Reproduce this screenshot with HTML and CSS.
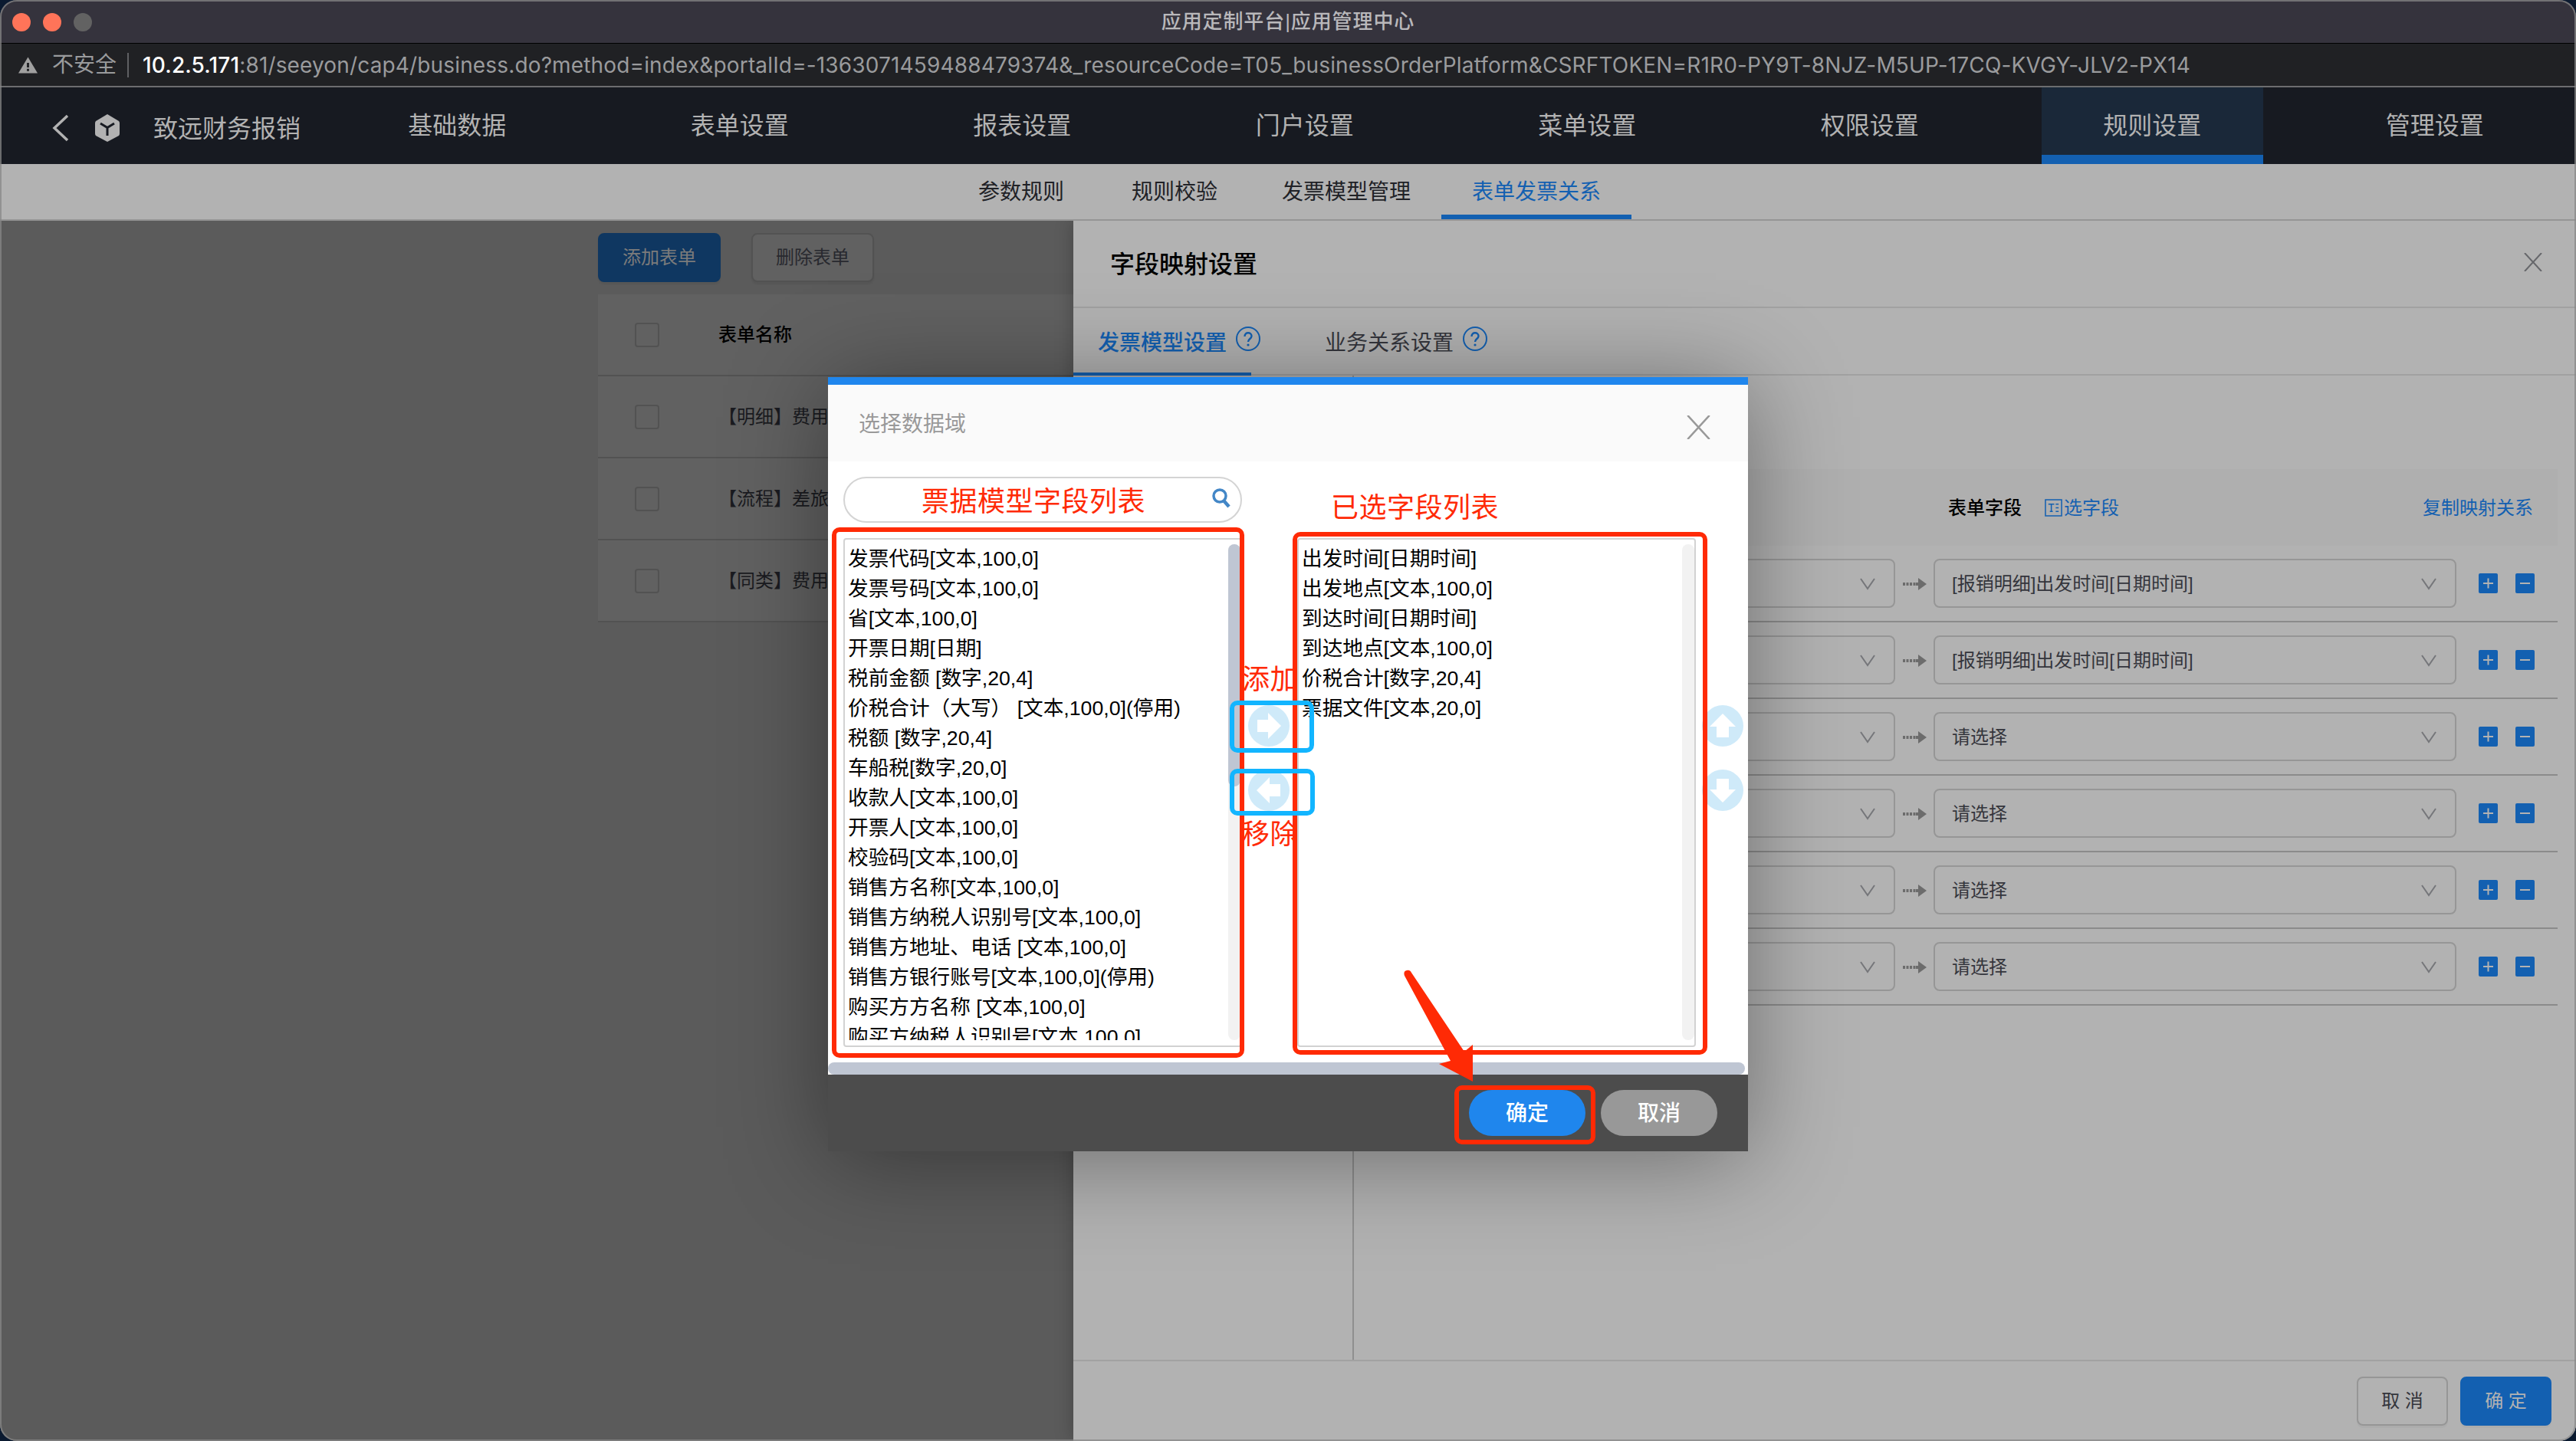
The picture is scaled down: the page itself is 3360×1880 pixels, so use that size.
FILE: index.html
```html
<!DOCTYPE html>
<html lang="zh-CN">
<head>
    <meta charset="UTF-8">
    <title>应用定制平台|应用管理中心</title>
    <link rel="stylesheet" href="styles.css">
</head>
<body>
<svg class="defs">
    <symbol id="i-close" viewBox="0 0 24 24"><path d="M1 0L23 24M23 0L1 24" fill="none" stroke="currentColor" stroke-width="2"/></symbol>
    <symbol id="i-down" viewBox="0 0 22 16"><path d="M2 1L11 14L20 1" fill="none" stroke="currentColor" stroke-width="2"/></symbol>
    <symbol id="i-link" viewBox="0 0 32 18"><path d="M0 9H20" fill="none" stroke="currentColor" stroke-width="4" stroke-dasharray="3 1.5"/><path d="M20 1L31 9L20 17V11H17V7H20Z" fill="currentColor"/></symbol>
    <symbol id="i-help" viewBox="0 0 32 32"><circle cx="16" cy="16" r="15" fill="none" stroke="currentColor" stroke-width="2"/><path d="M11.5 13C11.5 6.500 20.500 7 20.500 12.500C20.500 16 16 16 16 20" fill="none" stroke="currentColor" stroke-width="2.400"/><circle cx="16" cy="24" r="1.600" fill="currentColor"/></symbol>
    <symbol id="i-arrow" viewBox="0 0 54 54"><circle cx="27" cy="27" r="27" fill="#cfeaf9"/><path d="M12 19H26V10L43 27L26 44V35H12Z" fill="#fff"/></symbol>
</svg>
<div class="window">
    <div class="titlebar">
        <div class="lights"><i></i><i></i><i class="off"></i></div>
        <div class="title">应用定制平台|应用管理中心</div>
    </div>
    <div class="address">
        <svg class="warn" viewBox="0 0 26 22"><path d="M13 0L26 22H0Z" fill="#a0a0a0"/><path d="M13 8V14M13 16V19" stroke="#202124" stroke-width="3"/></svg>
        <span class="unsafe">不安全</span>
        <span class="url"><b>10.2.5.171</b>:81/seeyon/cap4/business.do?method=index&amp;portalId=-1363071459488479374&amp;_resourceCode=T05_businessOrderPlatform&amp;CSRFTOKEN=R1R0-PY9T-8NJZ-M5UP-17CQ-KVGY-JLV2-PX14</span>
    </div>
    <div class="nav">
        <div class="brand">
            <svg class="back" viewBox="0 0 22 36"><path d="M20 2L3 18L20 34" fill="none" stroke="#b2b2b2" stroke-width="3.500"/></svg>
            <svg class="cube" viewBox="0 0 32 36"><path d="M16 0L31 9Q32 10 32 12V25Q32 27 31 28L16 36L1 28Q0 27 0 25V12Q0 10 1 9Z" fill="#b2b2b2"/><path d="M7 12L16 17.500L25 12M16 17.500V28" fill="none" stroke="#171a21" stroke-width="3"/></svg>
            <span>致远财务报销</span>
        </div>
        <div class="nav-item"><span>基础数据</span></div>
        <div class="nav-item"><span>表单设置</span></div>
        <div class="nav-item"><span>报表设置</span></div>
        <div class="nav-item"><span>门户设置</span></div>
        <div class="nav-item"><span>菜单设置</span></div>
        <div class="nav-item"><span>权限设置</span></div>
        <div class="nav-item active"><span>规则设置</span></div>
        <div class="nav-item"><span>管理设置</span></div>
    </div>
    <div class="subnav">
        <div>参数规则</div>
        <div>规则校验</div>
        <div>发票模型管理</div>
        <div class="active">表单发票关系</div>
    </div>

    <div class="main">
        <div class="forms">
            <div class="form-btns">
                <div class="fbtn primary">添加表单</div>
                <div class="fbtn">删除表单</div>
            </div>
            <div class="form-row head"><i class="check"></i><span>表单名称</span></div>
            <div class="form-row"><i class="check"></i><span>【明细】费用</span></div>
            <div class="form-row"><i class="check"></i><span>【流程】差旅</span></div>
            <div class="form-row"><i class="check"></i><span>【同类】费用</span></div>
        </div>

        <div class="drawer">
            <div class="drawer-head"><span>字段映射设置</span><svg><use href="#i-close"/></svg></div>
            <div class="tabs">
                <div class="tab active">发票模型设置<svg><use href="#i-help"/></svg></div>
                <div class="tab">业务关系设置<svg><use href="#i-help"/></svg></div>
            </div>
            <div class="drawer-body">
                <div class="side"></div>
                <div class="mapping">
                    <div class="map-head">
                        <span class="name">表单字段</span>
                        <svg class="pick" viewBox="0 0 24 24"><path d="M1 1H23V23H1ZM5 7H13M9 7V17M7 17H11M15 7H19M15 12H19M15 17H19" fill="none" stroke="currentColor" stroke-width="1.600"/></svg>
                        <span class="link">选字段</span>
                        <span class="link copy">复制映射关系</span>
                    </div>
                    <div class="map-row"><div class="select from"><svg><use href="#i-down"/></svg></div><svg class="to"><use href="#i-link"/></svg><div class="select"><span>[报销明细]出发时间[日期时间]</span><svg><use href="#i-down"/></svg></div><i class="op plus"></i><i class="op"></i></div>
                    <div class="map-row"><div class="select from"><svg><use href="#i-down"/></svg></div><svg class="to"><use href="#i-link"/></svg><div class="select"><span>[报销明细]出发时间[日期时间]</span><svg><use href="#i-down"/></svg></div><i class="op plus"></i><i class="op"></i></div>
                    <div class="map-row"><div class="select from"><svg><use href="#i-down"/></svg></div><svg class="to"><use href="#i-link"/></svg><div class="select"><span>请选择</span><svg><use href="#i-down"/></svg></div><i class="op plus"></i><i class="op"></i></div>
                    <div class="map-row"><div class="select from"><svg><use href="#i-down"/></svg></div><svg class="to"><use href="#i-link"/></svg><div class="select"><span>请选择</span><svg><use href="#i-down"/></svg></div><i class="op plus"></i><i class="op"></i></div>
                    <div class="map-row"><div class="select from"><svg><use href="#i-down"/></svg></div><svg class="to"><use href="#i-link"/></svg><div class="select"><span>请选择</span><svg><use href="#i-down"/></svg></div><i class="op plus"></i><i class="op"></i></div>
                    <div class="map-row"><div class="select from"><svg><use href="#i-down"/></svg></div><svg class="to"><use href="#i-link"/></svg><div class="select"><span>请选择</span><svg><use href="#i-down"/></svg></div><i class="op plus"></i><i class="op"></i></div>
                </div>
            </div>
            <div class="drawer-foot">
                <div class="dbtn">取 消</div>
                <div class="dbtn primary">确 定</div>
            </div>
        </div>
    </div>

    <div class="modal">
        <div class="modal-head"><span>选择数据域</span><svg><use href="#i-close"/></svg></div>
        <div class="panes">
            <div class="pane">
                <div class="search"><svg viewBox="0 0 24 26"><circle cx="10" cy="10" r="8" fill="none" stroke="#4387c7" stroke-width="3.500"/><path d="M15 16L22 24" stroke="#4387c7" stroke-width="4.500"/></svg></div>
                <div class="list">
                    <div class="options">
                        <div>发票代码[文本,100,0]</div>
                        <div>发票号码[文本,100,0]</div>
                        <div>省[文本,100,0]</div>
                        <div>开票日期[日期]</div>
                        <div>税前金额 [数字,20,4]</div>
                        <div>价税合计（大写） [文本,100,0](停用)</div>
                        <div>税额 [数字,20,4]</div>
                        <div>车船税[数字,20,0]</div>
                        <div>收款人[文本,100,0]</div>
                        <div>开票人[文本,100,0]</div>
                        <div>校验码[文本,100,0]</div>
                        <div>销售方名称[文本,100,0]</div>
                        <div>销售方纳税人识别号[文本,100,0]</div>
                        <div>销售方地址、电话 [文本,100,0]</div>
                        <div>销售方银行账号[文本,100,0](停用)</div>
                        <div>购买方方名称 [文本,100,0]</div>
                        <div>购买方纳税人识别号[文本,100,0]</div>
                    </div>
                    <div class="track"><div class="thumb"></div></div>
                </div>
            </div>
            <div class="arrows">
                <svg><use href="#i-arrow"/></svg>
                <svg class="left"><use href="#i-arrow"/></svg>
            </div>
            <div class="pane chosen">
                <div class="list">
                    <div class="options">
                        <div>出发时间[日期时间]</div>
                        <div>出发地点[文本,100,0]</div>
                        <div>到达时间[日期时间]</div>
                        <div>到达地点[文本,100,0]</div>
                        <div>价税合计[数字,20,4]</div>
                        <div>票据文件[文本,20,0]</div>
                    </div>
                    <div class="track"></div>
                </div>
            </div>
            <div class="arrows sort">
                <svg class="up"><use href="#i-arrow"/></svg>
                <svg class="down"><use href="#i-arrow"/></svg>
            </div>
        </div>
        <div class="hscroll"></div>
        <div class="modal-foot">
            <div class="mbtn ok">确定</div>
            <div class="mbtn">取消</div>
        </div>

        <!-- 标注 -->
        <div class="note n-model">票据模型字段列表</div>
        <div class="note n-chosen">已选字段列表</div>
        <div class="note n-add">添加</div>
        <div class="note n-remove">移除</div>
        <div class="mark m-model"></div>
        <div class="mark m-chosen"></div>
        <div class="mark m-ok"></div>
        <div class="mark blue m-add"></div>
        <div class="mark blue m-remove"></div>
        <svg class="pointer" viewBox="0 0 90 146"><path d="M1 8Q-1 2 4 1Q8 0 10 4L79 107L90 98V146L46 123L61 119Z" fill="#ff2a05"/></svg>
    </div>
</div>
</body>
</html>
```

FILE: styles.css
```css
* { box-sizing: border-box; }
body { margin: 0; background: #0b1a30; font-family: "Liberation Sans", "Noto Sans CJK SC", sans-serif; font-size: 24px; color: #34353c; }
svg { display: block; flex: none; }
.defs { position: absolute; width: 0; height: 0; }

.window { position: relative; width: 3360px; height: 1880px; border-radius: 22px; overflow: hidden; display: flex; flex-direction: column; background: #b2b2b2; }
.window::after { content: ""; position: absolute; inset: 0; border: 2px solid rgba(135, 135, 135, 0.75); border-radius: 22px; }

.titlebar { height: 57px; padding-top: 2px; border-bottom: 1px solid #000; background: #35333d; display: flex; align-items: center; flex: none; }
.lights { display: flex; gap: 16px; width: 200px; padding-left: 16px; }
.lights i { width: 24px; height: 24px; border-radius: 50%; background: #ff7459; }
.lights i.off { background: #626262; }
.title { flex: 1; padding: 0 200px 7px 0; text-align: center; font-size: 26px; font-weight: 500; letter-spacing: 0.9px; color: #b9b8bb; }

.address { height: 57px; border-bottom: 2px solid #6c6d6f; background: #202124; display: flex; align-items: center; flex: none; color: #9a9b9d; font-size: 28px; white-space: nowrap; }
.warn { width: 25px; height: 22px; margin: 0 18px 0 24px; }
.unsafe { width: 101px; height: 32px; line-height: 32px; padding-left: 1px; border-right: 2px solid #5f6063; }
.url { margin-left: 18px; font-family: Inter, "Liberation Sans", sans-serif; font-size: 28px; letter-spacing: 0.15px; }
.url b { font-weight: 500; color: #fff; }

.nav { height: 100px; background: #171a21; color: #b2b2b2; font-size: 32px; display: flex; flex: none; }
.brand { width: 412px; display: flex; align-items: center; padding: 6px 0 0 68px; white-space: nowrap; }
.brand span { padding-bottom: 5px; }
.back { width: 22px; height: 36px; margin-right: 34px; }
.cube { width: 32px; height: 36px; margin-right: 44px; }
.nav-item { flex: 1; display: flex; justify-content: center; }
.nav-item span { width: 289px; text-align: center; line-height: 101px; }
.nav-item.active span { background: #1a2839; border-bottom: 12px solid #1360b1; }

.subnav { height: 74px; border-bottom: 2px solid #959595; display: flex; justify-content: center; flex: none; font-size: 28px; line-height: 74px; color: #202126; }
.subnav div { min-width: 200px; height: 72px; padding: 0 40px; text-align: center; }
.subnav .active { color: #1360b1; border-bottom: 6px solid #1360b1; }

.main { flex: 1; display: flex; min-height: 0; }
.forms { width: 1400px; padding: 16px 0 0 780px; background: #5b5b5b; color: #1a1b20; white-space: nowrap; overflow: hidden; }
.form-btns { display: flex; gap: 40px; margin-bottom: 16px; }
.fbtn { width: 160px; height: 64px; line-height: 59px; text-align: center; border: 2px solid #525252; border-radius: 8px; background: #616161; box-shadow: 0 3px 2px rgba(0, 0, 0, 0.05); color: #28292f; }
.fbtn.primary { background: #0f3761; border-color: #0f3761; color: #7b7b7b; }
.form-row { height: 107px; padding-left: 48px; border-bottom: 2px solid #525252; background: #616161; display: flex; align-items: center; }
.form-row span { padding-bottom: 4px; }
.form-row.head { font-weight: 500; color: #000; }
.check { width: 32px; height: 32px; margin-right: 77px; border: 2px solid #525252; border-radius: 4px; }

.drawer { position: relative; width: 1960px; background: #b2b2b2; box-shadow: 0 0 22px rgba(0, 0, 0, 0.25); display: flex; flex-direction: column; clip-path: inset(0 0 0 -40px); }
.drawer-head { height: 114px; padding: 0 44px 5px 48px; border-bottom: 2px solid #a1a1a1; display: flex; align-items: center; justify-content: space-between; font-size: 32px; font-weight: 500; color: #000; }
.drawer-head svg { width: 24px; height: 24px; color: #66676b; }
.tabs { height: 88px; border-bottom: 2px solid #a1a1a1; display: flex; font-size: 28px; white-space: nowrap; }
.tab { height: 88px; line-height: 91px; display: flex; }
.tab svg { width: 32px; height: 32px; margin: 24px 0 0 12px; color: #1360b1; }
.tab.active { width: 232px; padding-left: 32px; margin-right: 96px; font-weight: 500; color: #1360b1; border-bottom: 4px solid #1360b1; }
.drawer-body { flex: 1; display: flex; }
.side { width: 366px; border-right: 2px solid #8f8f8f; }
.mapping { flex: 1; padding: 122px 24px 0 0; }
.map-head { height: 100px; padding: 0 32px 0 775px; background: #afafaf; display: flex; align-items: center; }
.map-head span { padding-bottom: 3px; }
.map-head .name { width: 126px; font-weight: 500; color: #000; }
.pick { width: 23px; height: 23px; margin-right: 2px; color: #1360b1; }
.link { color: #1360b1; }
.copy { margin-left: auto; }
.map-row { height: 100px; padding: 0 30px 0 0; border-bottom: 2px solid #8b8b8b; display: flex; align-items: center; justify-content: flex-end; }
.select { width: 682px; height: 64px; padding: 0 23px 0 22px; border: 2px solid #969696; border-radius: 8px; display: flex; align-items: center; justify-content: space-between; }
.select span { padding-bottom: 3px; }
.select svg { width: 22px; height: 16px; margin-top: 1px; color: #75767a; }
.select.from { justify-content: flex-end; }
.to { width: 32px; height: 18px; margin: 2px 8px 0 10px; color: #6c6c6c; }
.op { position: relative; width: 25px; height: 26px; margin-left: 23px; background: #1360b1; border-radius: 2px; }
.op.plus { margin-left: 29px; }
.op::before, .op.plus::after { content: ""; position: absolute; left: 6px; top: 12px; width: 13px; height: 2px; background: #b2b2b2; }
.op.plus::after { transform: rotate(90deg); }
.drawer-foot { height: 106px; padding: 20px 32px 0 0; border-top: 2px solid #a1a1a1; display: flex; justify-content: flex-end; gap: 16px; }
.dbtn { width: 119px; height: 64px; line-height: 60px; border: 2px solid #969696; border-radius: 8px; text-align: center; box-shadow: 0 3px 1px rgba(0, 0, 0, 0.03); }
.dbtn.primary { background: #1360b1; border-color: #1360b1; color: #b2b2b2; }

.modal { position: absolute; left: 1080px; top: 492px; width: 1200px; height: 1010px; border-top: 10px solid #1f86ed; background: #fff; box-shadow: 0 10px 120px rgba(0, 0, 0, 0.4); display: flex; flex-direction: column; color: #000; }
.modal-head { height: 100px; padding: 0 49px 0 40px; background: #fafafa; display: flex; align-items: center; justify-content: space-between; font-size: 28px; color: #999; }
.modal-head span { padding-bottom: 3px; }
.modal-head svg { width: 31px; height: 31px; margin-top: 10px; }
.panes { height: 784px; padding: 20px 0 0 20px; display: flex; }
.pane { width: 520px; flex: none; }
.pane.chosen { padding-top: 80px; }
.search { height: 60px; margin-bottom: 20px; padding: 13px; border: 2px solid #d4d4d4; border-radius: 30px; display: flex; justify-content: flex-end; }
.search svg { width: 24px; height: 26px; }
.list { height: 664px; padding: 5px 0 7px 4px; border: 2px solid #d2d2d2; border-radius: 4px; display: flex; }
.options { flex: 1; height: 648px; padding-top: 1px; overflow: hidden; font-size: 26.66px; line-height: 39px; white-space: nowrap; }
.track { width: 16px; margin-top: 1px; border-radius: 8px; background: #f2f2f2; }
.thumb { height: 316px; border-radius: 8px; background: #bfc6d3; }
.arrows { width: 72px; flex: none; padding: 298px 0 0 8px; display: flex; flex-direction: column; gap: 30px; }
.arrows.sort { width: 68px; }
.arrows svg { width: 54px; height: 54px; }
.arrows .left { transform: rotate(180deg); }
.arrows .up { transform: rotate(-90deg); }
.arrows .down { transform: rotate(90deg); }
.hscroll { width: 1196px; height: 16px; border-radius: 8px; background: #bfc6d3; }
.modal-foot { height: 100px; padding: 20px 40px; background: #4c4c4c; display: flex; justify-content: flex-end; gap: 20px; }
.mbtn { width: 152px; height: 60px; line-height: 61px; border-radius: 30px; background: #989898; color: #fff; text-align: center; font-size: 28px; font-weight: 500; }
.mbtn.ok { background: #1f86ed; }

/* 标注层 */
.note { position: absolute; font-size: 36px; line-height: 50px; letter-spacing: 0.5px; color: #ff2a05; white-space: nowrap; }
.n-model { left: 122px; top: 128px; }
.n-chosen { left: 656px; top: 136px; }
.n-add { left: 540px; top: 360px; }
.n-remove { left: 540px; top: 562px; }
.mark { position: absolute; border: 6px solid #ff2a05; border-radius: 10px; }
.mark.blue { border-color: #12b5ff; }
.m-model { left: 5px; top: 186px; width: 538px; height: 692px; }
.m-chosen { left: 606px; top: 192px; width: 541px; height: 682px; }
.m-ok { left: 817px; top: 914px; width: 184px; height: 77px; }
.m-add { left: 524px; top: 412px; width: 110px; height: 68px; }
.m-remove { left: 524px; top: 501px; width: 111px; height: 61px; }
.pointer { position: absolute; left: 751px; top: 763px; width: 90px; height: 146px; }
```
